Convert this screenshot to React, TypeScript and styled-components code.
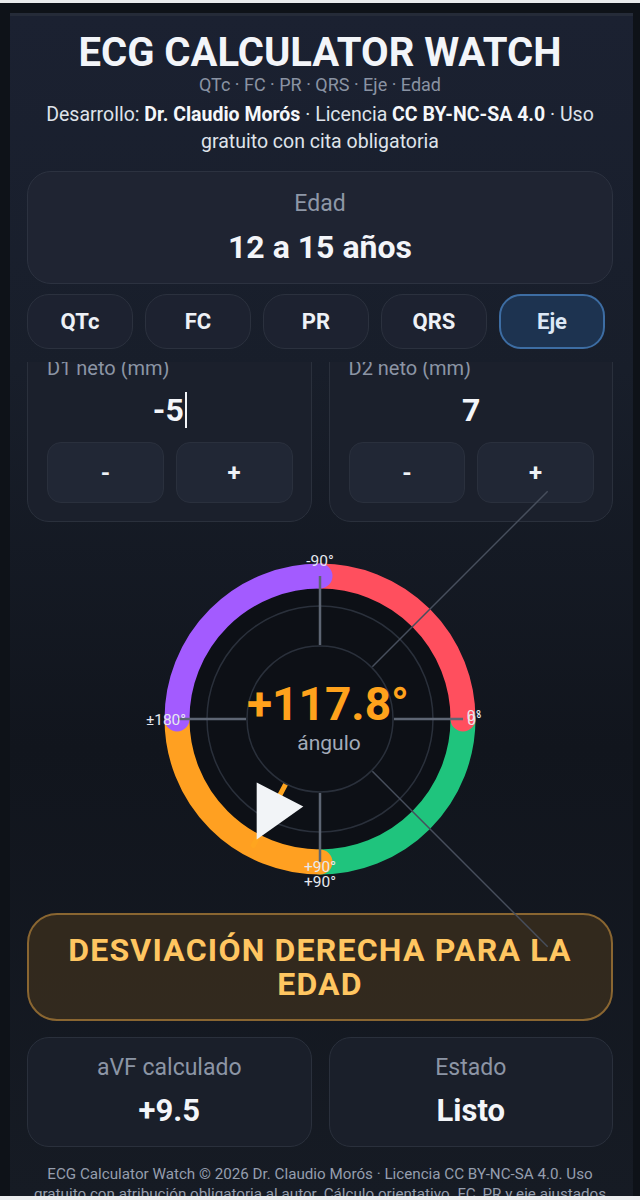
import React, { useLayoutEffect, useRef } from 'react';
import styled, { createGlobalStyle } from 'styled-components';

const FONT = `Roboto, 'Noto Sans', 'Liberation Sans', sans-serif`;

const GlobalStyle = createGlobalStyle`
  html, body {
    margin: 0;
    padding: 0;
    background: #0e1218;
  }
  body {
    font-family: ${FONT};
    color: #eef1f6;
  }
  * {
    box-sizing: border-box;
  }
`;

const Screen = styled.div`
  height: 1200px;
  display: flex;
  flex-direction: column;
  overflow: hidden;
  border-top: 3px solid #e9eaec;
  border-bottom: 4px solid #eceef0;
  padding: 10px 7px 0 10px;
  background: #0e1218;
`;

const Panel = styled.main`
  flex: 1;
  min-height: 0;
  display: flex;
  flex-direction: column;
  padding: 15px 20px 0 17px;
  border-top: 3px solid #252b38;
  background: linear-gradient(
    180deg,
    #1b2131 0%,
    #181e2a 30%,
    #11151d 62%,
    #161b24 100%
  );
`;

const Header = styled.header`
  display: flex;
  flex-direction: column;
  align-items: center;
  text-align: center;
`;

const Title = styled.h1`
  margin: 0;
  font-size: 40px;
  line-height: 44px;
  font-weight: 700;
  color: #f3f5f9;
`;

const Subtitle = styled.div`
  font-size: 18px;
  line-height: 20px;
  color: #8a93a3;
`;

const Credits = styled.p`
  margin: 6px 0 0;
  font-size: 19.5px;
  line-height: 27px;
  color: #dfe3ea;

  strong {
    color: #f5f7fa;
  }
`;

const AgeCard = styled.div`
  margin-top: 16px;
  padding: 19px 16px 18px;
  display: flex;
  flex-direction: column;
  align-items: center;
  gap: 12px;
  border: 1px solid #2c3240;
  border-radius: 24px;
  background: #1f2432;
`;

const AgeLabel = styled.div`
  font-size: 23px;
  line-height: 26px;
  color: #8e97a7;
`;

const AgeValue = styled.div`
  font-size: 32px;
  line-height: 36px;
  font-weight: 700;
  color: #f3f5f9;
`;

const Tabs = styled.nav`
  margin-top: 10px;
  display: flex;
  gap: 12px;
`;

const Tab = styled.button<{ $active?: boolean }>`
  width: 106px;
  height: 55px;
  font-family: ${FONT};
  font-size: 22px;
  font-weight: 700;
  color: ${(p) => (p.$active ? '#dce8f6' : '#eef1f6')};
  border-radius: 22px;
  border: ${(p) => (p.$active ? '2px solid #3d6da3' : '1px solid #2b313e')};
  background: ${(p) => (p.$active ? '#1d3350' : '#1d2230')};
`;

const Scroller = styled.section`
  margin-top: 13px;
  flex: 1;
  min-height: 0;
  overflow: hidden;
`;

const InputGrid = styled.div`
  display: grid;
  grid-template-columns: 1fr 1fr;
  gap: 17px;
`;

const InputCard = styled.div`
  padding: 19px 18px 18px 19px;
  border: 1px solid #2a303c;
  border-radius: 22px;
  background: #1b202c;
  display: flex;
  flex-direction: column;
`;

const InputLabel = styled.label`
  font-size: 20px;
  line-height: 24px;
  color: #8c95a5;
`;

const ValueField = styled.div`
  margin-top: 8px;
  height: 44px;
  display: flex;
  align-items: center;
  justify-content: center;
  font-size: 32px;
  font-weight: 700;
  color: #f3f5f9;
`;

const Caret = styled.span`
  width: 2px;
  height: 36px;
  margin-left: 1px;
  background: #f3f5f9;
`;

const StepRow = styled.div`
  margin-top: 10px;
  display: grid;
  grid-template-columns: 1fr 1fr;
  gap: 12px;
`;

const StepButton = styled.button`
  height: 61px;
  font-family: ${FONT};
  font-size: 24px;
  font-weight: 700;
  color: #eef1f6;
  border: 1px solid #2a303d;
  border-radius: 14px;
  background: #212735;
`;

const GaugeWrap = styled.div`
  margin-top: 27px;
  display: flex;
  justify-content: center;
`;

const GaugeSvg = styled.svg`
  display: block;
  overflow: visible;
`;

const Verdict = styled.div`
  margin-top: 24px;
  height: 108px;
  padding: 0 20px;
  display: flex;
  align-items: center;
  justify-content: center;
  text-align: center;
  border: 2px solid #8a6631;
  border-radius: 30px;
  background: rgba(92, 66, 26, 0.42);
  font-size: 32px;
  line-height: 34px;
  font-weight: 700;
  letter-spacing: 1.2px;
  color: #ffc661;
`;

const StatGrid = styled.div`
  margin-top: 16px;
  display: grid;
  grid-template-columns: 1fr 1fr;
  gap: 17px;
`;

const StatCard = styled.div`
  height: 110px;
  padding: 16px 12px 15px;
  display: flex;
  flex-direction: column;
  align-items: center;
  gap: 10px;
  border: 1px solid #2a303c;
  border-radius: 22px;
  background: #1a1f2a;
`;

const StatLabel = styled.div`
  font-size: 23px;
  line-height: 28px;
  color: #8c95a5;
`;

const StatValue = styled.div`
  font-size: 31px;
  line-height: 38px;
  font-weight: 700;
  color: #f3f5f9;
`;

const Footer = styled.footer`
  margin-top: 17px;
  font-size: 15.2px;
  line-height: 20px;
  text-align: center;
  color: #959eae;
`;

const C = 170;
const RING = 143;

const polar = (deg: number, r: number) => {
  const a = (deg * Math.PI) / 180;
  return [C + r * Math.cos(a), C + r * Math.sin(a)];
};

const arc = (from: number, to: number, r: number) => {
  const [x1, y1] = polar(from, r);
  const [x2, y2] = polar(to, r);
  return `M ${x1} ${y1} A ${r} ${r} 0 0 1 ${x2} ${y2}`;
};

// drawn in this order so the rounded caps overlap like the original
const segments = [
  { from: 0, to: 90, color: '#1fc47d' },
  { from: 90, to: 180, color: '#ffa021' },
  { from: 270, to: 360, color: '#ff4f5e' },
  { from: 180, to: 270, color: '#a35bff' },
];

const Spoke: React.FC<{ deg: number; r1: number; r2: number; thin?: boolean }> = ({
  deg,
  r1,
  r2,
  thin,
}) => {
  const [x1, y1] = polar(deg, r1);
  const [x2, y2] = polar(deg, r2);
  return (
    <line
      x1={x1}
      y1={y1}
      x2={x2}
      y2={y2}
      stroke={thin ? '#474e5c' : '#5d6573'}
      strokeWidth={thin ? 1.5 : 2.5}
    />
  );
};

const AxisGauge: React.FC<{ angle: number }> = ({ angle }) => {
  const [nx, ny] = polar(angle, RING);
  const label = { fontSize: 15.5, fill: '#e6e9ef', fontFamily: FONT };

  return (
    <GaugeSvg width={340} height={340} viewBox="0 0 340 340">
      <circle cx={C} cy={C} r={131} fill="#0d1016" />
      <circle cx={C} cy={C} r={113} fill="none" stroke="#2a303b" strokeWidth={1.5} />
      {segments.map((s) => (
        <path
          key={s.from}
          d={arc(s.from, s.to, RING)}
          fill="none"
          stroke={s.color}
          strokeWidth={25}
          strokeLinecap="round"
        />
      ))}
      {[0, 90, 180, 270].map((d) => (
        <Spoke key={d} deg={d} r1={74} r2={RING} />
      ))}
      <Spoke deg={-45} r1={74} r2={322} thin />
      <Spoke deg={45} r1={74} r2={322} thin />
      <line x1={C} y1={C} x2={nx} y2={ny} stroke="#ffa51f" strokeWidth={5} strokeLinecap="round" />
      <circle cx={C} cy={C} r={73} fill="#0d1016" stroke="#2a303b" strokeWidth={1.5} />
      <polygon points="106.7,233.5 153.3,257.5 106.7,290.5" fill="#f2f4f7" />

      <text x={170} y={11.5} textAnchor="middle" dominantBaseline="central" {...label}>
        -90°
      </text>
      <text x={16} y={170.5} textAnchor="middle" dominantBaseline="central" {...label}>
        ±180°
      </text>
      <text x={324} y={167} textAnchor="middle" dominantBaseline="central" {...label}>
        0°
      </text>
      <text x={324.5} y={171} textAnchor="middle" dominantBaseline="central" {...label}>
        0°
      </text>
      <text x={170} y={317.5} textAnchor="middle" dominantBaseline="central" {...label}>
        +90°
      </text>
      <text x={170} y={332.5} textAnchor="middle" dominantBaseline="central" {...label}>
        +90°
      </text>

      <text
        x={178}
        y={170.5}
        textAnchor="middle"
        fontFamily={FONT}
        fontSize={46}
        fontWeight={700}
        fill="#ffa21c"
      >
        +{angle.toFixed(1)}°
      </text>
      <text x={179} y={200.5} textAnchor="middle" fontFamily={FONT} fontSize={21} fill="#a3abb9">
        ángulo
      </text>
    </GaugeSvg>
  );
};

const tabs = ['QTc', 'FC', 'PR', 'QRS', 'Eje'];

const App: React.FC = () => {
  const scrollRef = useRef<HTMLElement>(null);

  useLayoutEffect(() => {
    if (scrollRef.current) scrollRef.current.scrollTop = 26;
  }, []);

  return (
    <>
      <GlobalStyle />
      <Screen>
        <Panel>
          <Header>
            <Title>ECG CALCULATOR WATCH</Title>
            <Subtitle>QTc · FC · PR · QRS · Eje · Edad</Subtitle>
            <Credits>
              Desarrollo: <strong>Dr. Claudio Morós</strong> · Licencia{' '}
              <strong>CC BY-NC-SA 4.0</strong> · Uso gratuito con cita obligatoria
            </Credits>
          </Header>

          <AgeCard>
            <AgeLabel>Edad</AgeLabel>
            <AgeValue>12 a 15 años</AgeValue>
          </AgeCard>

          <Tabs>
            {tabs.map((t) => (
              <Tab key={t} $active={t === 'Eje'}>
                {t}
              </Tab>
            ))}
          </Tabs>

          <Scroller ref={scrollRef}>
            <InputGrid>
              <InputCard>
                <InputLabel>D1 neto (mm)</InputLabel>
                <ValueField>
                  -5
                  <Caret />
                </ValueField>
                <StepRow>
                  <StepButton>-</StepButton>
                  <StepButton>+</StepButton>
                </StepRow>
              </InputCard>
              <InputCard>
                <InputLabel>D2 neto (mm)</InputLabel>
                <ValueField>7</ValueField>
                <StepRow>
                  <StepButton>-</StepButton>
                  <StepButton>+</StepButton>
                </StepRow>
              </InputCard>
            </InputGrid>

            <GaugeWrap>
              <AxisGauge angle={117.8} />
            </GaugeWrap>

            <Verdict>DESVIACIÓN DERECHA PARA LA EDAD</Verdict>

            <StatGrid>
              <StatCard>
                <StatLabel>aVF calculado</StatLabel>
                <StatValue>+9.5</StatValue>
              </StatCard>
              <StatCard>
                <StatLabel>Estado</StatLabel>
                <StatValue>Listo</StatValue>
              </StatCard>
            </StatGrid>

            <Footer>
              ECG Calculator Watch © 2026 Dr. Claudio Morós · Licencia CC BY-NC-SA 4.0. Uso
              gratuito con atribución obligatoria al autor. Cálculo orientativo. FC, PR y eje
              ajustados por edad.
            </Footer>
          </Scroller>
        </Panel>
      </Screen>
    </>
  );
};

export default App;
